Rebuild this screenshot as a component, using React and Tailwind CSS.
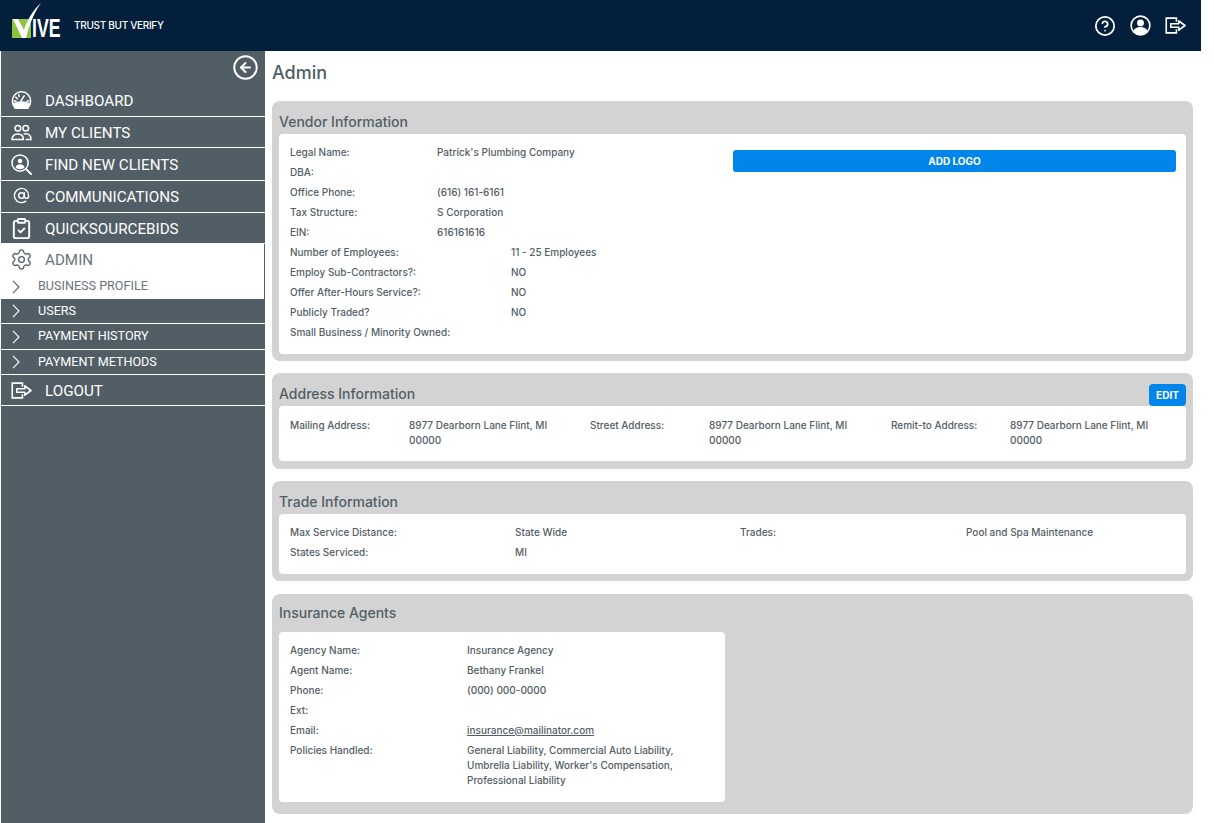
import React from 'react';
import { AtSign, CircleArrowLeft, CircleHelp, ClipboardCheck, Settings } from 'lucide-react';

const ExitIcon = ({ className }) => (
  <svg viewBox="0 0 22 18" className={className} fill="none" stroke="currentColor" strokeWidth="1.7">
    <path d="M12 5V1.2H1.2v15.6H12V13" />
    <path d="M6 7.2h8.5V4l6.5 5-6.5 5v-3.2H6z" strokeLinejoin="round" />
  </svg>
);

const Chevron = ({ className }) => (
  <svg viewBox="0 0 8 14" className={className} fill="none" stroke="currentColor" strokeWidth="1.1">
    <path d="M1 .8L7 7l-6 6.2" />
  </svg>
);

const GaugeIcon = ({ className }) => (
  <svg viewBox="0 0 22 20" className={className} fill="none" stroke="currentColor" strokeWidth="1.6">
    <path d="M4.2 17.2A9.6 9.6 0 1 1 17.8 17.2" />
    <path d="M2.6 13.6c2.4-1.4 5.4-2 8.4-2s6 .6 8.4 2l-1.6 4.6H4.2z" fill="currentColor" />
    <path d="M10.4 10.5l3.4-5.4M5 6.5l1.6 1.6M3.2 10.6h2M18.8 10.6h-2M8 3.8l.6 2" strokeLinecap="round" />
  </svg>
);

const PeopleIcon = ({ className }) => (
  <svg viewBox="0 0 22 18" className={className} fill="none" stroke="currentColor" strokeWidth="1.6">
    <circle cx="7.2" cy="4.5" r="3" />
    <circle cx="15.5" cy="4.5" r="3" />
    <path d="M1 16.5c0-3.8 2.6-6 6-6 3.6 0 6 2.2 6 6z" />
    <path d="M13.2 10.7c.8-.3 1.5-.4 2.3-.4 3.2 0 5.5 2.2 5.5 6.2h-5.6" />
  </svg>
);

const FindIcon = ({ className }) => (
  <svg viewBox="0 0 22 22" className={className} fill="none" stroke="currentColor" strokeWidth="1.6">
    <circle cx="9.5" cy="9.5" r="8.5" />
    <path d="M15.8 15.8L21 21" strokeWidth="2" strokeLinecap="round" />
    <circle cx="9.5" cy="7.4" r="2.4" fill="currentColor" stroke="none" />
    <path d="M4.8 14.2c.6-2.4 2.4-3.4 4.7-3.4s4.1 1 4.7 3.4c-1.2 1.2-2.8 1.8-4.7 1.8s-3.5-.6-4.7-1.8z" fill="currentColor" stroke="none" />
  </svg>
);

const UserCircleIcon = ({ className }) => (
  <svg viewBox="0 0 22 22" className={className} fill="none" stroke="currentColor" strokeWidth="1.7">
    <circle cx="11" cy="11" r="9.8" />
    <circle cx="11" cy="8.3" r="3.6" fill="currentColor" stroke="none" />
    <path d="M3.6 17c1-3 3.8-4.4 7.4-4.4s6.4 1.4 7.4 4.4c-1.8 2.4-4.4 3.8-7.4 3.8S5.4 19.4 3.6 17z" fill="currentColor" stroke="none" />
  </svg>
);

const mainNav = [
  { label: 'DASHBOARD', icon: GaugeIcon, size: 'w-[21px] h-[19px]', h: 'h-[31px]' },
  { label: 'MY CLIENTS', icon: PeopleIcon, size: 'w-[21px] h-[17px]', h: 'h-[30px]' },
  { label: 'FIND NEW CLIENTS', icon: FindIcon, size: 'w-[21px] h-[21px]', h: 'h-[32px]' },
  { label: 'COMMUNICATIONS', icon: AtSign, size: 'w-[17px] h-[17px] mb-[3px]', h: 'h-[31px]' },
  { label: 'QUICKSOURCEBIDS', icon: ClipboardCheck, size: 'w-[23px] h-[23px]', h: 'h-[30px]' },
];

const subNav = [
  { label: 'USERS', h: 'h-[25px]' },
  { label: 'PAYMENT HISTORY', h: 'h-[26px]' },
  { label: 'PAYMENT METHODS', h: 'h-[25px]' },
];

const NavRow = ({ item }) => {
  const Icon = item.icon;
  return (
    <div className={`${item.h} flex items-center border-b border-white box-content`}>
      <span className="w-[44px] flex justify-center pr-[4px]">
        <Icon className={item.size} />
      </span>
      <span className="text-[15.2px] pt-[2px]">{item.label}</span>
    </div>
  );
};

const Sidebar = () => (
  <aside className="w-[264px] ml-[1px] shrink-0 bg-[#525e66] text-white font-['Roboto',sans-serif]">
    <div className="h-[34px] flex justify-end items-center pr-[6px] pb-[2px]">
      <CircleArrowLeft className="w-[27px] h-[27px]" strokeWidth={1.7} />
    </div>
    {mainNav.map((item) => <NavRow key={item.label} item={item} />)}
    <div className="bg-white text-[#6a7479] border-r border-[#525e66]">
      <div className="h-[30px] flex items-center">
        <span className="w-[44px] flex justify-center pr-[4px]">
          <Settings className="w-[23px] h-[23px] text-[#525e66]" strokeWidth={1.4} />
        </span>
        <span className="text-[15.2px] pt-[2px]">ADMIN</span>
      </div>
      <div className="h-[25px] flex items-center text-[12.6px]">
        <span className="w-[37px] pl-[11px]"><Chevron className="w-[8px] h-[14px] text-[#525e66]" /></span>
        BUSINESS PROFILE
      </div>
    </div>
    {subNav.map((item) => (
      <div key={item.label} className={`${item.h} flex items-center text-[12.6px] border-b border-white box-border`}>
        <span className="w-[37px] pl-[11px]"><Chevron className="w-[8px] h-[14px]" /></span>
        {item.label}
      </div>
    ))}
    <div className="h-[31px] flex items-center border-b border-white">
      <span className="w-[44px] flex justify-center pr-[4px]"><ExitIcon className="w-[21px] h-[17px]" /></span>
      <span className="text-[15.2px] pt-[2px]">LOGOUT</span>
    </div>
  </aside>
);

const Row = ({ label, value, labelW, className = 'h-5' }) => (
  <div className={`flex items-center ${className}`}>
    <span className={`${labelW} shrink-0`}>{label}</span>
    <span>{value}</span>
  </div>
);

const Card = ({ title, action, className, titleClass = 'leading-[41px]', children }) => (
  <section className={`bg-[#d3d3d3] rounded-[8px] px-[7px] ${className}`}>
    <div className="flex items-end justify-between h-[33px]">
      <h2 className={`text-[14px] font-medium h-[33px] ${titleClass}`}>{title}</h2>
      {action}
    </div>
    {children}
  </section>
);

const vendorTop = [
  ['Legal Name:', "Patrick's Plumbing Company"],
  ['DBA:', ''],
  ['Office Phone:', '(616) 161-6161'],
  ['Tax Structure:', 'S Corporation'],
  ['EIN:', '616161616'],
];

const vendorBottom = [
  ['Number of Employees:', '11 - 25 Employees'],
  ['Employ Sub-Contractors?:', 'NO'],
  ['Offer After-Hours Service?:', 'NO'],
  ['Publicly Traded?', 'NO'],
  ['Small Business / Minority Owned:', ''],
];

const addresses = ['Mailing Address:', 'Street Address:', 'Remit-to Address:'];

const agents = [
  ['Agency Name:', 'Insurance Agency'],
  ['Agent Name:', 'Bethany Frankel'],
  ['Phone:', '(000) 000-0000'],
  ['Ext:', ''],
];

export default function App() {
  return (
    <div className="h-screen w-[1201px] overflow-hidden flex flex-col text-[#525e66] font-['Inter','Liberation_Sans',sans-serif]">
      <header className="h-[51px] shrink-0 bg-[#031f3b] text-white flex items-center justify-between pl-[12px] pr-[15px]">
        <div className="flex items-center">
          <div className="relative w-[50px] h-[51px]">
            <div className="absolute left-0 top-[19px] w-[19px] h-[19px] bg-[#8cc63f]" />
            <svg viewBox="0 0 30 36" className="absolute left-0 top-[3px] w-[30px] h-[36px]">
              <path d="M1 16h5l6 11C15 17 21 7 29 0 22 10 17 22 14 35h-4z" fill="#fff" />
            </svg>
            <span className="absolute left-[20px] top-[13px] text-[26px] leading-[30px] font-bold font-['Liberation_Sans',sans-serif] scale-x-[.68] origin-left">IVE</span>
          </div>
          <span className="ml-[12px] text-[10px] font-medium tracking-[-0.3px]">TRUST BUT VERIFY</span>
        </div>
        <div className="flex items-center gap-[14px]">
          <CircleHelp className="w-[22px] h-[22px]" strokeWidth={1.9} />
          <UserCircleIcon className="w-[21px] h-[21px]" />
          <ExitIcon className="w-[21px] h-[17px]" />
        </div>
      </header>

      <div className="flex flex-1 min-h-0">
        <Sidebar />
        <main className="flex-1 pl-[7px] pr-[8px] text-[10px] font-medium flex flex-col">
          <h1 className="text-[18px] font-medium h-[50px] flex items-center pb-[8px]">Admin</h1>

          <Card title="Vendor Information" className="h-[260px]">
            <div className="bg-white rounded-[4px] h-[220px] pl-[11px] pr-[10px] pt-[8px] flex">
              <div className="w-[443px] shrink-0">
                {vendorTop.map(([l, v]) => <Row key={l} label={l} value={v} labelW="w-[147px]" />)}
                {vendorBottom.map(([l, v]) => <Row key={l} label={l} value={v} labelW="w-[221px]" />)}
              </div>
              <button className="h-[22px] flex-1 bg-[#0085ea] rounded-[3px] text-white font-bold mt-[8px]">ADD LOGO</button>
            </div>
          </Card>

          <Card
            title="Address Information"
            className="h-[96px] mt-[12px]"
            action={<button className="h-[22px] w-[37px] bg-[#0085ea] rounded-[4px] text-white font-bold">EDIT</button>}
          >
            <div className="bg-white rounded-[4px] h-[55px] pl-[11px] pt-[12px] grid grid-cols-[300px_301px_1fr] leading-[15px]">
              {addresses.map((a) => (
                <div key={a} className="flex">
                  <span className="w-[119px] shrink-0">{a}</span>
                  <span className="w-[160px]">8977 Dearborn Lane Flint, MI 00000</span>
                </div>
              ))}
            </div>
          </Card>

          <Card title="Trade Information" className="h-[100px] mt-[12px]">
            <div className="bg-white rounded-[4px] h-[60px] pl-[11px] pt-[8px] grid grid-cols-[225px_225px_226px_1fr] auto-rows-[20px] items-center">
              <span>Max Service Distance:</span>
              <span>State Wide</span>
              <span>Trades:</span>
              <span>Pool and Spa Maintenance</span>
              <span>States Serviced:</span>
              <span>MI</span>
            </div>
          </Card>

          <Card title="Insurance Agents" titleClass="leading-[38px]" className="h-[220px] mt-[13px]">
            <div className="bg-white rounded-[4px] w-[446px] h-[170px] mt-[5px] pl-[11px] pt-[8px]">
              {agents.map(([l, v]) => <Row key={l} label={l} value={v} labelW="w-[177px]" />)}
              <Row label="Email:" value={<span className="underline">insurance@mailinator.com</span>} labelW="w-[177px]" />
              <div className="flex leading-[15px] mt-[3px]">
                <span className="w-[177px] shrink-0">Policies Handled:</span>
                <span className="w-[220px]">General Liability, Commercial Auto Liability, Umbrella Liability, Worker's Compensation, Professional Liability</span>
              </div>
            </div>
          </Card>
        </main>
      </div>
    </div>
  );
}
